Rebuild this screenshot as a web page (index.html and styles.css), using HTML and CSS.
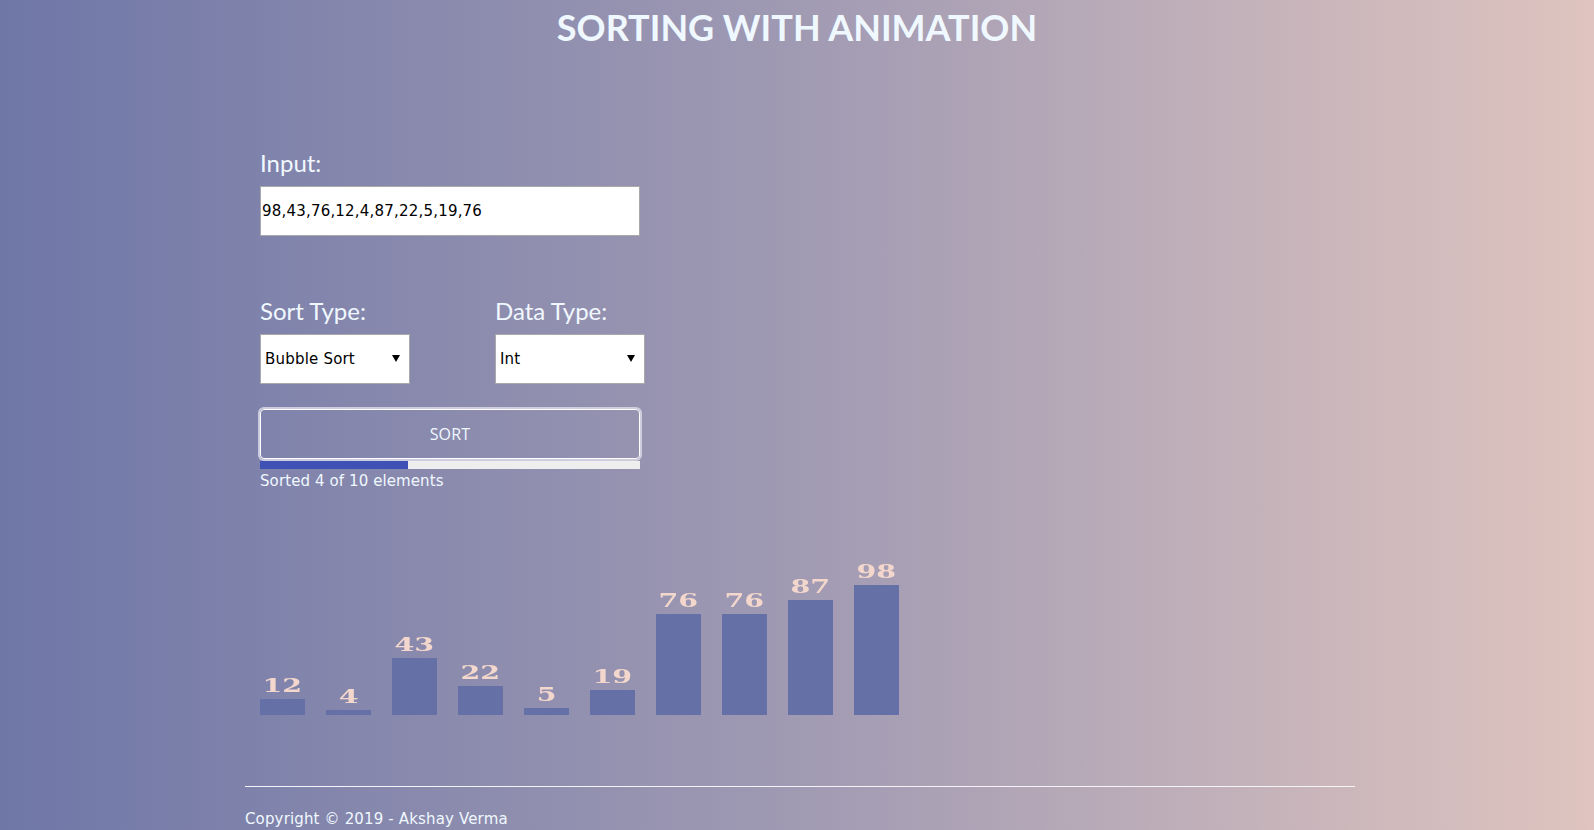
FILE: index.html
```html
<!DOCTYPE html>
<html lang="en">
<head>
<meta charset="utf-8">
<title>Sorting with Animation</title>
<link rel="stylesheet" href="styles.css">
</head>
<body>
<h1 class="title">SORTING WITH ANIMATION</h1>
<main class="page">
  <section class="form">
    <label class="field-label" for="inp">Input:</label>
    <input id="inp" class="text-input" type="text" value="98,43,76,12,4,87,22,5,19,76">
    <div class="select-row">
      <div class="select-col">
        <label class="field-label">Sort Type:</label>
        <div class="select-wrap">
          <select class="select"><option>Bubble Sort</option></select>
          <svg class="arrow" width="8" height="7" viewBox="0 0 8 7"><path d="M0 0H8L4 7Z" fill="#000"/></svg>
        </div>
      </div>
      <div class="select-col">
        <label class="field-label">Data Type:</label>
        <div class="select-wrap">
          <select class="select"><option>Int</option></select>
          <svg class="arrow" width="8" height="7" viewBox="0 0 8 7"><path d="M0 0H8L4 7Z" fill="#000"/></svg>
        </div>
      </div>
    </div>
    <button class="sort-btn">SORT</button>
    <div class="progress"><div class="progress-fill" style="width:39%"></div></div>
    <div class="status">Sorted 4 of 10 elements</div>
  </section>
  <section class="chart">
    <div class="bar-item"><span class="bar-label">12</span><div class="bar" style="height:16px"></div></div>
    <div class="bar-item"><span class="bar-label">4</span><div class="bar" style="height:5px"></div></div>
    <div class="bar-item"><span class="bar-label">43</span><div class="bar" style="height:57px"></div></div>
    <div class="bar-item"><span class="bar-label">22</span><div class="bar" style="height:29px"></div></div>
    <div class="bar-item"><span class="bar-label">5</span><div class="bar" style="height:7px"></div></div>
    <div class="bar-item"><span class="bar-label">19</span><div class="bar" style="height:25px"></div></div>
    <div class="bar-item"><span class="bar-label">76</span><div class="bar" style="height:101px"></div></div>
    <div class="bar-item"><span class="bar-label">76</span><div class="bar" style="height:101px"></div></div>
    <div class="bar-item"><span class="bar-label">87</span><div class="bar" style="height:115px"></div></div>
    <div class="bar-item"><span class="bar-label">98</span><div class="bar" style="height:130px"></div></div>
  </section>
  <footer class="footer">
    <hr class="rule">
    <p class="copyright">Copyright © 2019 - Akshay Verma</p>
  </footer>
</main>
</body>
</html>
```
FILE: styles.css
```css
html, body {
  margin: 0;
  padding: 0;
}
body {
  width: 1594px;
  height: 830px;
  overflow: hidden;
  background: linear-gradient(to right, #6f77a7 0%, #a09ab3 50%, #dfc4bf 100%);
  color: #f0f8ff;
  font-family: "DejaVu Sans", Verdana, sans-serif;
}
.title {
  margin: 0;
  text-align: center;
  font-family: Lato, "Open Sans", sans-serif;
  font-weight: 700;
  font-size: 36px;
  line-height: 54px;
  color: #f0f8ff;
}
.page {
  width: 1110px;
  margin: 0 0 0 245px;
}
.form {
  padding-left: 15px;
  margin-top: 94px;
  display: flex;
  flex-direction: column;
  align-items: flex-start;
}
.field-label {
  display: block;
  font-family: Lato, "Open Sans", sans-serif;
  font-size: 24px;
  line-height: 30px;
  color: #f0f8ff;
}
.text-input {
  box-sizing: border-box;
  margin: 8px 0 0;
  width: 380px;
  height: 50px;
  border: 1px solid #a9a9a9;
  padding: 0 1px;
  background: #fff;
  color: #000;
  font-family: "DejaVu Sans", Verdana, sans-serif;
  font-size: 15px;
  letter-spacing: 0.2px;
  outline: none;
}
.select-row {
  display: flex;
  gap: 85px;
  margin-top: 60px;
}
.select-wrap {
  position: relative;
  margin-top: 8px;
  width: 150px;
  height: 50px;
}
.select {
  box-sizing: border-box;
  width: 150px;
  height: 50px;
  appearance: none;
  -webkit-appearance: none;
  border: 1px solid #a9a9a9;
  border-radius: 0;
  padding: 0 4px;
  background: #fff;
  color: #000;
  font-family: "DejaVu Sans", Verdana, sans-serif;
  font-size: 15px;
  letter-spacing: 0.2px;
}
.arrow {
  position: absolute;
  right: 10px;
  top: 21px;
}
.sort-btn {
  box-sizing: border-box;
  margin-top: 25px;
  width: 380px;
  height: 50px;
  background: transparent;
  border: 1px solid #ffffff;
  border-radius: 4px;
  box-shadow: 0 0 0 2px rgba(214, 212, 228, 0.9);
  color: #f0f8ff;
  font-family: "Open Sans", Lato, sans-serif;
  font-size: 16px;
  letter-spacing: 0.2px;
}
.progress {
  margin-top: 2px;
  width: 380px;
  height: 8px;
  background: #eeeeee;
}
.progress-fill {
  height: 100%;
  background: #3f51b5;
}
.status {
  margin-top: 3px;
  font-size: 15px;
  line-height: 18px;
  letter-spacing: 0.1px;
  color: #f0f8ff;
}
.chart {
  box-sizing: border-box;
  padding-left: 15px;
  height: 225px;
  display: flex;
  align-items: flex-end;
  gap: 21px;
  filter: blur(0.5px);
}
.bar-item {
  width: 45px;
  display: flex;
  flex-direction: column;
  align-items: center;
}
.bar-label {
  display: block;
  font-family: "DejaVu Serif", "Liberation Serif", serif;
  font-weight: 700;
  font-size: 19px;
  line-height: 18px;
  color: #f3d7cc;
  transform: scaleX(1.5);
  margin-bottom: 5px;
}
.bar {
  width: 45px;
  background: #6470a6;
}
.footer {
  margin-top: 71px;
}
.rule {
  margin: 0;
  border: 0;
  border-top: 1px solid #f4f4f8;
  height: 0;
}
.copyright {
  margin: 23px 0 0;
  font-size: 15px;
  line-height: 18px;
  letter-spacing: 0.15px;
  color: #f0f8ff;
}
```
